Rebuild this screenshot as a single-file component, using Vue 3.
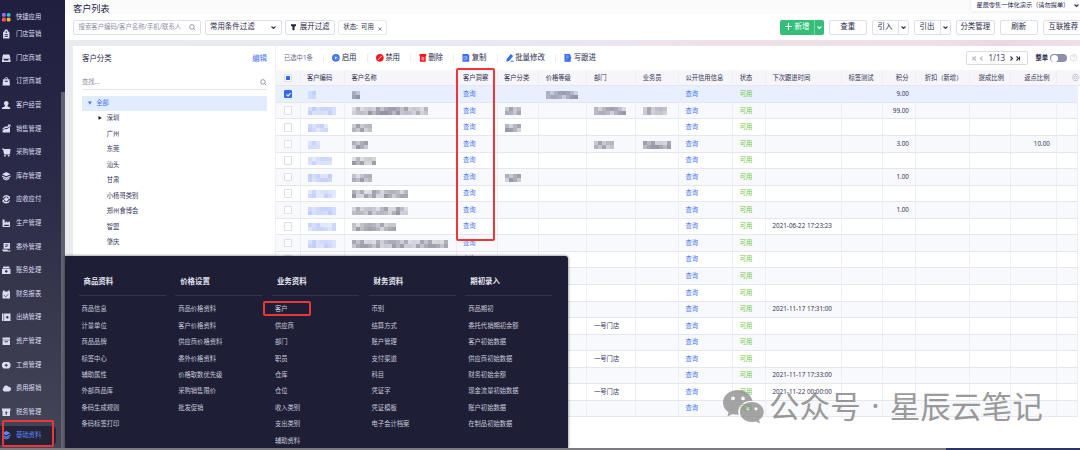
<script setup>
const nav = [
  ['快捷应用', 'grid'], ['门店营销', 'tag'], ['门店商城', 'shop'], ['订货商城', 'bag'], ['客户经营', 'user'],
  ['销售管理', 'chart'], ['采购管理', 'cart'], ['库存管理', 'layers'], ['应收应付', 'coin'], ['生产管理', 'factory'],
  ['委外管理', 'doc'], ['账务处理', 'safe'], ['财务报表', 'report'], ['出纳管理', 'book'], ['资产管理', 'box'],
  ['工资管理', 'wallet'], ['费用报销', 'cloud'], ['税务管理', 'tax'], ['基础资料', 'layers'],
]
const icons = {
  tag: 'M5 1.500a3 3 0 0 1 6 0l3 3V16H2V4.500zM7 2.500h2v3H7zM5 8h6v1.500H5zM5 11h6v1.500H5z',
  shop: 'M2 1h12l2 8H0zM0 10h4v2h8v-2h4v5H0z',
  bag: 'M2 4h2.500a3.500 3.500 0 0 1 7 0H14l1 12H1zM6 4h4a2 2 0 0 0-4 0zM5 7v2h6V7z',
  user: 'M8 0a4.500 4.500 0 0 1 2.500 8.200V10l5 2.500V15H0v-2.500L5.500 10V8.200A4.500 4.500 0 0 1 8 0z',
  chart: 'M1 12l5-3 3 1 6-5v11H1zM1 8l6-4 2 1 3-2-1-2h5v4l-1-1-6 4-2-1-6 4z',
  cart: 'M0 1h3l1 1h12l-1 10H4L2 3H0zM4 13h3v3H4zM11 13h3v3h-3z',
  layers: 'M8 0l8 4-8 4-8-4zM0 6.500l8 4 8-4V9l-8 4-8-4zM2 11l6 3 6-3v2l-6 3-6-3z',
  coin: 'M8 0a8 8 0 0 1 6 3l1-1v5h-4l1.500-2A6 6 0 0 0 2.500 6L1 5a8 8 0 0 1 7-5zM8 16a8 8 0 0 1-6-3l-1 1V9h4l-1.500 2a6 6 0 0 0 10-1l1.500 1a8 8 0 0 1-7 5zM8 3.500L12.500 8 8 12.500 3.500 8z',
  factory: 'M1 1h4v6l5-3v3l5-3v11H1zM4 11v2h9v-2z',
  doc: 'M3 0h12v11H3zM0 12h10l1 2h5v2H2zM6 3v1.500h6V3zM6 6v1.500h4V6z',
  safe: 'M2 1h12v3H2zM0 5h16v10H0zM8 7l-3 3 3 3 3-3z',
  report: 'M2 1h3v2h6V1h3v2h1v13H1V3h1zM4 9l3 3 5-5v1.500l-5 5-3-3z',
  book: 'M0 1h3v14H0zM4 1h12v14H4zM10 5L7 8l3 3 3-3z',
  box: 'M1 1h14v4H1zM1 6h14v9H1zM5 8v2h6V8z',
  wallet: 'M3 2h10l3 3v6l-3 3H3l-3-3V5zM7 5v2H5v2h2v2h2V9h2V7H9V5z',
  cloud: 'M4 14a4 4 0 0 1-1-7 5 5 0 0 1 9-2 4.500 4.500 0 0 1 1 9z',
  tax: 'M0 1h16v4h-1v10H1V5H0zM8 6l-3 3h2v4h2V9h2z',
}
const tree = ['深圳', '广州', '东莞', '汕头', '甘肃', '小杨哥类别', '郑州食博会', '智盟', '肇庆']
const actions = [
  ['启用', 'play', 43.5], ['禁用', 'ban', 43], ['删除', 'trash', 43.5], ['复制', 'copy', 43.5],
  ['批量修改', 'edit', 58.5], ['写跟进', 'note', 50],
]
const heads = ['客户编码', '客户名称', '客户洞察', '客户分类', '价格等级', '部门', '业务员', '公开信用信息', '状态', '下次跟进时间', '标签测试', '积分', '折扣（新增）', '提成比例', '返点比例', '']

// Widths of masked values, by row and column
const masks = [
  { 0: 8, 1: 8, 4: 32 }, { 0: 28, 1: 76, 3: 16, 5: 32, 6: 24 }, { 0: 20, 1: 20, 3: 16 },
  { 0: 12, 1: 16, 5: 20, 6: 28 }, { 0: 24, 1: 24 }, { 0: 24, 1: 20, 3: 16 }, { 0: 28, 1: 56 },
  { 0: 28, 1: 56 }, { 0: 28, 1: 44 }, { 0: 28, 1: 96 },
]
const values = {
  0: { 11: '9.00' }, 1: { 11: '99.00' }, 3: { 11: '3.00', 14: '10.00' }, 5: { 11: '1.00' }, 7: { 11: '1.00' },
  8: { 9: '2021-06-22 17:23:23' }, 13: { 9: '2021-11-17 17:31:00' }, 14: { 5: '一号门店' }, 16: { 5: '一号门店' },
  17: { 9: '2021-11-17 17:33:00' }, 18: { 5: '一号门店', 9: '2021-11-22 00:00:00' },
}
const cell = (r, c) => {
  if (c === 2 || c === 7) return '查询'
  if (c === 8) return '可用'
  return values[r]?.[c] ?? ''
}
const mosaic = (r, c) => {
  const w = masks[r]?.[c]
  if (!w) return []
  const n = w / 4
  return Array.from({ length: n * 2 }, (_, i) => {
    const k = ((i * 37 + r * 23 + c * 11 + i * i * 7) % 17) / 17
    const bottom = i >= n ? 0.06 : 0
    return c === 0
      ? `rgba(120,150,250,${(0.2 + k * 0.26).toFixed(2)})`
      : `rgba(70,70,95,${(0.16 + k * 0.36 + bottom).toFixed(2)})`
  })
}
const menu = [
  ['商品资料', ['商品信息', '计量单位', '商品品牌', '标签中心', '辅助属性', '外部商品库', '条码生成规则', '条码标签打印']],
  ['价格设置', ['商品价格资料', '客户价格资料', '供应商价格资料', '委外价格资料', '价格取数优先级', '采购销售限价', '批发促销']],
  ['业务资料', ['客户', '供应商', '部门', '职员', '仓库', '仓位', '收入类别', '支出类别', '辅助资料']],
  ['财务资料', ['币别', '结算方式', '账户管理', '支付渠道', '科目', '凭证字', '凭证模板', '电子会计档案']],
  ['期初录入', ['商品期初', '委托代销期初余额', '客户初始数据', '供应商初始数据', '财务初始余额', '现金流量初始数据', '账户初始数据', '在制品初始数据']],
]
</script>

<template>
  <div class="app">
    <nav class="side">
      <div v-for="(n, i) in nav" :key="i" class="nav" :class="{ first: i === 0, on: i === 18 }">
        <svg v-if="n[1] === 'grid'" viewBox="0 0 16 16">
          <rect width="7" height="7" rx="2" fill="#8c6cf0" /><rect x="9" width="7" height="7" rx="3" fill="#2cc7b4" />
          <rect y="9" width="7" height="7" rx="2" fill="#f05a5a" /><rect x="9" y="9" width="7" height="7" rx="2" fill="#f3b53c" />
        </svg>
        <svg v-else viewBox="0 0 16 16"><path :d="icons[n[1]]" fill="currentColor" fill-rule="evenodd" /></svg>
        <span>{{ n[0] }}</span>
      </div>
      <i class="thumb"></i>
    </nav>

    <main class="main">
      <header class="top">
        <h1>客户列表</h1>
        <div class="account">星辰零售一体化演示（请勿提单）
          <svg class="chev" viewBox="0 0 10 10"><path d="M1 3l4 4 4-4" /></svg>
        </div>
      </header>

      <div class="bar">
        <div class="search">搜索客户编码/客户名称/手机/联系人
          <svg class="mag" viewBox="0 0 10 10"><circle cx="4.500" cy="4.500" r="3.500" /><path d="M7 7l2.500 2.500" /></svg>
        </div>
        <div class="ctl select">常用条件过滤<svg class="chev" viewBox="0 0 10 10"><path d="M1 3l4 4 4-4" /></svg></div>
        <div class="ctl filter">
          <svg viewBox="0 0 10 12"><path d="M0 0h10v3L7 5v7H3V5L0 3z" fill="#23233f" /></svg>展开过滤
        </div>
        <div class="ctl chip">状态:&nbsp; 可用<svg viewBox="0 0 8 8"><path d="M1 1l6 6M7 1L1 7" /></svg></div>
        <div class="add"><span><svg viewBox="0 0 10 10"><path d="M5 0v10M0 5h10" /></svg>新增</span><b><svg class="chev" viewBox="0 0 10 10"><path d="M1 3l4 4 4-4" /></svg></b></div>
        <div class="ctl btn">查重</div>
        <div class="ctl btn split"><span>引入</span><b><svg class="chev" viewBox="0 0 10 10"><path d="M1 3l4 4 4-4" /></svg></b></div>
        <div class="ctl btn split"><span>引出</span><b><svg class="chev" viewBox="0 0 10 10"><path d="M1 3l4 4 4-4" /></svg></b></div>
        <div class="ctl btn wide">分类管理</div>
        <div class="ctl btn">刷新</div>
        <div class="ctl btn last">互联推荐</div>
      </div>
      <div class="band"></div>

      <div class="body">
        <aside class="tree">
          <div class="thead"><span>客户分类</span><a>编辑</a></div>
          <div class="find">查找...<svg class="mag" viewBox="0 0 10 10"><circle cx="4.500" cy="4.500" r="3.500" /><path d="M7 7l2.500 2.500" /></svg></div>
          <div class="all"><svg viewBox="0 0 8 8"><path d="M0 1h8L4 8z" fill="#3c72f5" /></svg>全部</div>
          <div v-for="(t, i) in tree" :key="t" class="leaf">
            <svg viewBox="0 0 8 8"><path v-if="i === 0" d="M1 0v8l7-4z" fill="#111122" /></svg>{{ t }}
          </div>
        </aside>

        <section class="panel">
          <div class="tools">
            <span class="picked">已选中<em>1</em>条</span>
            <div v-for="a in actions" :key="a[0]" class="act" :style="{ width: a[2] + 'px' }">
              <svg viewBox="0 0 16 16">
                <g v-if="a[1] === 'play'"><circle cx="8" cy="8" r="8" fill="#3a6df0" /><circle cx="8" cy="8" r="4.500" fill="none" stroke="#8fb0ff" /><path d="M6.500 5l4.500 3-4.500 3z" fill="#fff" /></g>
                <g v-else-if="a[1] === 'ban'"><circle cx="8" cy="8" r="8" fill="#fb1420" /><path d="M4 12l8-8" stroke="#fff" stroke-width="1.800" /></g>
                <g v-else-if="a[1] === 'trash'"><path d="M1 0h14v4H1zM2 4h12v12H2z" fill="#fb1420" /><path d="M6 7v5h4V7z" fill="none" stroke="#fff" stroke-width="1.300" /></g>
                <g v-else-if="a[1] === 'copy'"><path d="M1 0h11l3 3v13H1z" fill="#3a6df0" /><path d="M4 5h6v7H4zM6 8h6" fill="none" stroke="#b8ccff" stroke-width="1.300" /></g>
                <g v-else-if="a[1] === 'edit'"><path d="M1 11L10 0l5 4L7 14l-6 2zM10 14h6v2h-6z" fill="#3a6df0" /></g>
                <g v-else><path d="M1 0h11l2 3v3l2 2-2 2v6H1z" fill="#3a6df0" /><path d="M4 4h6M4 7h6M4 11h3" stroke="#c4d4ff" stroke-width="1.300" /></g>
              </svg>{{ a[0] }}
            </div>
            <div class="pager">
              <svg class="off" viewBox="0 0 24 10"><path d="M2 1v8M8 1L4 5l4 4M21 1l-4 4 4 4" /></svg>
              <span>1/13</span>
              <svg viewBox="0 0 24 10"><path d="M3 1l4 4-4 4M15 1l4 4-4 4M21 1v8" /></svg>
            </div>
            <span class="whole">整单</span><i class="toggle"></i>
            <svg class="help" viewBox="0 0 16 16"><circle cx="8" cy="8" r="7" /><path d="M5.500 6.500a2.500 2.500 0 1 1 3.500 2Q8 9 8 10M8 11.500v1.500" /></svg>
          </div>

          <div class="row hrow">
            <div class="cell ck"><i class="box half"></i></div>
            <div v-for="(h, c) in heads" :key="c" class="cell" :class="{ num: c > 10 }">{{ h }}
              <svg v-if="c === 15" class="gear" viewBox="0 0 16 16"><path d="M4.500 1h7l4 7-4 7h-7L.5 8z" /><circle cx="8" cy="8" r="3" /></svg>
            </div>
          </div>
          <div v-for="(_, r) in 20" :key="r" class="row" :class="{ sel: r === 0, alt: r % 2 === 1 }">
            <div class="cell ck"><i class="box" :class="{ checked: r === 0 }"><svg v-if="r === 0" viewBox="0 0 10 10"><path d="M2 5l2.300 2.300L8 3" /></svg></i></div>
            <div v-for="(h, c) in heads" :key="c" class="cell" :class="{ num: c > 10, link: c === 2 || c === 7, ok: c === 8 }">
              <div v-if="masks[r]?.[c]" class="mosaic" :style="{ width: masks[r][c] + 'px' }"><i v-for="(m, k) in mosaic(r, c)" :key="k" :style="{ background: m }"></i></div>
              <template v-else>{{ cell(r, c) }}</template>
            </div>
          </div>
        </section>
      </div>
    </main>

    <div class="menu">
      <div v-for="m in menu" :key="m[0]" class="mcol">
        <h2>{{ m[0] }}</h2>
        <div v-for="t in m[1]" :key="t" class="mi">{{ t }}</div>
      </div>
    </div>

    <div class="edge"></div>
    <i class="mark m1"></i><i class="mark m2"></i><i class="mark m3"></i>
    <div class="wm">
      <svg viewBox="0 0 41 34">
        <path fill="#8a8a8a" fill-rule="evenodd" d="M15 0C6.500 0 0 5.500 0 12.500c0 4 2 7.500 5.500 9.800L4.500 26.500l5-2.500c2 .6 4 .9 6.200.8C13.500 17 20 10.500 29.500 10.800 28 4.500 22 0 15 0zM10 6.500a1.900 1.900 0 1 1 0 3.800 1.900 1.900 0 0 1 0-3.800zM20 6.500a1.900 1.900 0 1 1 0 3.800 1.900 1.900 0 0 1 0-3.800z" />
        <path fill="#8a8a8a" fill-rule="evenodd" d="M28.800 12C22 12 17 16.500 17 22s5 10 11.800 10c1.500 0 3-.2 4.200-.6L37 33.500l-1-3.600c3-2 4.700-4.700 4.700-7.900C40.700 16.500 35.500 12 28.800 12zM25 17.200a1.600 1.600 0 1 1 0 3.200 1.600 1.600 0 0 1 0-3.200zM33 17.200a1.600 1.600 0 1 1 0 3.200 1.600 1.600 0 0 1 0-3.200z" />
      </svg>
      <span>公众号</span><span class="dot">·</span><span>星辰云笔记</span>
    </div>
  </div>
</template>

<style>
body { margin: 0; overflow: hidden; }
</style>
<style scoped>
* { box-sizing: border-box; }
.app { position: relative; width: 1080px; height: 450px; display: flex; overflow: hidden; background: #fff; color: #34345a; font: 6.3px/1 "Noto Sans", "Noto Sans CJK SC", sans-serif; white-space: nowrap; }
svg { display: block; flex: none; overflow: visible; }
em, i { font-style: normal; }
.side { position: relative; width: 65px; flex: none; padding-top: 12.1px; background: linear-gradient(#201f3f, #292846 35%, #38384e 70%, #464659); color: #dcdcf0; overflow: hidden; }
.nav { height: 23.62px; display: flex; align-items: center; padding-left: 1.8px; gap: 5.7px; width: 56px; }
.nav svg { width: 8.5px; height: 8.5px; }
.nav.first { height: 10.4px; }
.nav.on { color: #5f86f5; height: 18.5px; margin-top: 2.5px; background: #242439; border-radius: 0 4px 4px 0; }
.thumb { position: absolute; left: 61px; top: 92px; width: 4px; bottom: 0; background: #62626f; }
.main { flex: 1; min-width: 0; display: flex; flex-direction: column; }
.top { height: 14px; flex: none; background: #fbfbfc; display: flex; justify-content: space-between; }
h1 { margin: 3px 0 0 8px; font-size: 9.2px; line-height: 11px; font-weight: 400; color: #26264a; }
.account { width: 109px; height: 11px; padding-left: 5.5px; display: flex; align-items: center; background: #fff; font-size: 6.2px; color: #23234a; box-shadow: 0 0 3px #e6e6ee; }
.chev { width: 5px; height: 5px; fill: none; stroke: #33335a; stroke-width: 2.2; }
.account .chev { margin-left: 5px; }
.bar { height: 26px; flex: none; display: flex; padding: 5.5px 0 0 8px; }
.search, .ctl { height: 15px; border: 1px solid #dfdfea; border-radius: 2px; display: flex; align-items: center; font-size: 7.45px; color: #2a2a4c; flex: none; }
.search { width: 128px; padding: 0 5px 0 4.5px; font-size: 6.38px; color: #9091aa; justify-content: space-between; }
.mag { width: 6.5px; height: 6.5px; fill: none; stroke: #85859c; stroke-width: 1.3; }
.select { width: 76.5px; margin-left: 4px; padding: 0 5px 0 4px; justify-content: space-between; }
.filter { width: 49.5px; margin-left: 3.5px; padding-left: 5px; gap: 3.8px; }
.filter svg { width: 5px; height: 6.5px; }
.chip { width: 48.5px; margin-left: 3.5px; padding-left: 4.3px; font-size: 6.4px; border-color: #e9e9f0; }
.chip svg { width: 4px; height: 4px; margin: 3px 0 0 4px; stroke: #555570; stroke-width: 1.4; fill: none; }
.add { width: 44.5px; height: 15px; margin-left: 393px; flex: none; display: flex; align-items: center; background: #33bf78; color: #fff; border-radius: 2px; font-size: 7.45px; }
.add span { width: 34px; padding-left: 5px; display: flex; align-items: center; gap: 3px; }
.add span svg { width: 7px; height: 7px; stroke: #fff; stroke-width: 1.6; }
.add b { flex: 1; align-self: stretch; display: grid; place-items: center; border-left: 1px solid #79d9a7; }
.add .chev { stroke: #fff; }
.btn { width: 37.5px; margin-left: 5px; justify-content: center; }
.split { width: 37px; }
.split span { flex: 1; text-align: center; }
.split b { width: 10px; align-self: stretch; display: grid; place-items: center; border-left: 1px solid #dfdfea; }
.wide { width: 39.5px; }
.last { width: 42px; justify-content: flex-start; padding-left: 5px; }
.band { height: 6px; flex: none; background: linear-gradient(90deg, #eaebef 0, #e8e9f1 35%, #eae6f1 50%, #efe0e8 66%, #eee2e8 85%, #ecd6e4 92%, #efe0ea); }
.body { flex: 1; display: flex; min-height: 0; }
.tree { width: 210px; flex: none; padding: 0 8px 0 9px; border-left: 8px solid #eaebef; }
.thead { height: 25px; display: flex; align-items: center; justify-content: space-between; font-size: 7.45px; color: #2a2a4c; }
.thead a { color: #4674f0; }
.find { height: 19px; display: flex; align-items: center; justify-content: space-between; padding: 5px 1px 0 0; margin-bottom: 5.5px; color: #8b8ba2; border-bottom: 1px solid #e7e7ef; }
.all { height: 15.5px; background: #e1edfe; color: #3c72f5; display: flex; align-items: center; gap: 4.5px; padding-left: 6px; }
.all svg, .leaf svg { width: 3.8px; height: 3.8px; }
.leaf { height: 15.5px; display: flex; align-items: center; gap: 5px; padding-left: 16px; }
.all + .leaf { margin-top: -.5px; }
.panel { flex: 1; min-width: 0; border-left: 1px solid #f0f0f5; }
.tools { height: 24.4px; display: flex; align-items: center; padding-left: 8px; }
.picked { width: 39px; color: #6b6b86; }
.picked em { color: #3c6ff0; }
.act { height: 8px; display: flex; align-items: center; gap: 1.8px; padding-left: 8.2px; border-left: 1px solid #ededf3; font-size: 7.45px; color: #2a2a4c; }
.act svg { width: 7.7px; height: 7.7px; }
.pager { width: 61.5px; height: 14.5px; margin-left: 361px; display: flex; align-items: center; justify-content: center; gap: 4px; border: 1px solid #dadae6; border-radius: 2px; font-size: 8px; color: #4a4a68; }
.pager svg { width: 12px; height: 5px; fill: none; stroke: #2b2b55; stroke-width: 2.2; }
.pager .off { stroke: #b6b6c4; }
.whole { margin-left: 8px; font-weight: 700; color: #26264a; width: 14.5px; }
.toggle { width: 17px; height: 8.5px; border-radius: 5px; background: #8e8fae; display: flex; padding: .8px; }
.toggle::before { content: ""; width: 7px; height: 7px; border-radius: 50%; background: #fff; }
.help { width: 7.5px; height: 7.5px; margin-left: 2.5px; fill: none; stroke: #bbbbc8; }
.row { display: grid; grid-template-columns: 24.5px 44.5px 111.5px 41px 41.7px 48.3px 48.7px 42.8px 54.3px 32.7px 76px 41.2px 32.8px 54px 41.5px 45.5px 21px; width: 802px; height: 16.55px; border-bottom: 1px solid #e6e6f0; }
.cell { display: flex; align-items: center; padding: 0 6.5px; border-right: 1px solid #eeeef4; min-width: 0; overflow: hidden; }
.cell.num { justify-content: flex-end; }
.row:not(.hrow) .num { padding-right: 6px; }
.alt { background: #f8f9fc; }
.sel { background: #e8effe; }
.hrow { height: 16px; background: #f5f5fa; width: 805px; color: #30304f; }
.hrow .cell:last-child { padding: 0 0 0 15.5px; justify-content: flex-start; overflow: visible; border-right: 0; }
.gear { width: 7px; height: 7px; fill: none; stroke: #aaaab8; stroke-width: 1.4; }
.link { color: #4674f0; }
.ok { color: #6cc63c; }
.cell.ck { padding: 0; justify-content: center; }
.box { width: 8.5px; height: 8.5px; border: 1px solid #dedee5; border-radius: 1px; background: #fff; display: grid; place-items: center; }
.half::before { content: ""; width: 4px; height: 4px; background: #2f6bee; }
.checked { background: #2f6bee; border-color: #2f6bee; }
.checked svg { width: 7px; height: 7px; fill: none; stroke: #fff; stroke-width: 1.5; }
.mosaic { display: grid; grid-template-columns: repeat(auto-fill, 4px); grid-auto-rows: 4px; flex: none; margin: 1.5px 0 0 .5px; }
.menu { position: absolute; left: 65px; top: 256px; width: 502.5px; height: 192px; padding: 18.2px 0 0 13.5px; display: flex; gap: 9.7px; background: #1e1f36; color: #c9c9dc; border-radius: 0 3px 0 0; box-shadow: 0 0 3px rgba(30, 30, 50, .7); }
.mcol { width: 87px; flex: none; }
h2 { margin: 0 0 5px; height: 22px; padding: 0 0 6px 5px; display: flex; align-items: center; border-bottom: 1px solid #33344b; font-size: 7.45px; font-weight: 600; color: #e6e6f2; }
.mi { height: 16.45px; padding-left: 3px; display: flex; align-items: center; }
.edge { position: absolute; left: 0; right: 0; top: 448px; height: 2px; background: linear-gradient(90deg, #7c7c80 946px, #2c3568 946px); }
.mark { position: absolute; border: 2px solid #ef3535; border-radius: 2px; }
.m1 { left: 456px; top: 68px; width: 39px; height: 172.5px; }
.m2 { left: 263px; top: 301px; width: 48px; height: 15px; }
.m3 { left: 2px; top: 420px; width: 51.5px; height: 27px; }
.wm { position: absolute; left: 723px; top: 386px; height: 38px; display: flex; align-items: center; color: #7c7c7c; opacity: .76; font: 400 30.6px/38px "Noto Sans CJK SC", sans-serif; }
.wm svg { width: 41px; height: 34px; margin: 3px 5px 0 0; }
.dot { width: 29px; display: flex; justify-content: center; font-family: "Noto Sans", sans-serif; }
</style>
